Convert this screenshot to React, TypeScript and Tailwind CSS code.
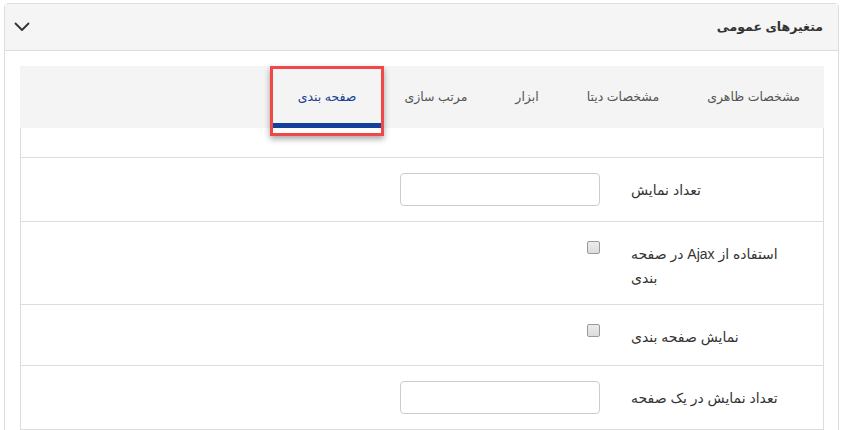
import { FC, ReactNode } from "react";

const tabs = [
  { label: "مشخصات ظاهری", active: false },
  { label: "مشخصات دیتا", active: false },
  { label: "ابزار", active: false },
  { label: "مرتب سازی", active: false },
  { label: "صفحه بندی", active: true },
];

const fontStack = { fontFamily: '"Liberation Sans", "DejaVu Sans", sans-serif' };

const TextBox: FC = () => (
  <div className="h-[33px] w-[200px] rounded-[4px] border border-[#ccc] bg-white" />
);

const CheckBox: FC = () => (
  <div className="h-[13px] w-[13px] rounded-[2px] border border-[#9a9a9a] bg-gradient-to-b from-[#ececec] to-[#dcdcdc]" />
);

interface RowProps {
  label: ReactNode;
  height: string;
  kind: "input" | "check";
}

const Row: FC<RowProps> = ({ label, height, kind }) => {
  if (kind === "input") {
    return (
      <div className={`flex items-center border-b border-[#ddd] ${height}`}>
        <div className="mr-[32px] w-[160px] text-left text-[14px] leading-[24px] text-[#333]">{label}</div>
        <div className="mr-[31px]">
          <TextBox />
        </div>
      </div>
    );
  }
  return (
    <div className={`flex items-start border-b border-[#ddd] ${height}`}>
      <div className="mr-[32px] w-[160px] pt-[20px] text-left text-[14px] leading-[24px] text-[#333]">{label}</div>
      <div className="mr-[31px] w-[200px] pt-[19px]">
        <CheckBox />
      </div>
    </div>
  );
};

const App: FC = () => {
  return (
    <div dir="rtl" className="h-[430px] w-full overflow-hidden bg-white" style={fontStack}>
      <div className="ml-[4px] mr-[4px] mt-[3px] rounded-t-[4px] border border-[#ddd]">
        {/* header */}
        <div className="flex h-[47px] items-center justify-between border-b border-[#ddd] bg-[#f5f5f5] pl-[9px] pr-[15px]">
          <span className="text-[12.5px] font-bold text-[#333]">متغیرهای عمومی</span>
          <svg width="16" height="10" viewBox="0 0 16 10" fill="none" stroke="#333" strokeWidth="1.8" strokeLinecap="round" strokeLinejoin="round">
            <path d="M1.5 1.5 8 8l6.5-6.5" />
          </svg>
        </div>

        {/* body */}
        <div className="pb-0 pl-[15px] pr-[14px] pt-[15px]">
          <div className="flex h-[62px] items-stretch bg-[#f4f4f4]">
            {tabs.map((tab) => (
              <div
                key={tab.label}
                className={`relative flex items-center px-[24px] text-[12.5px] ${
                  tab.active ? "text-[#1c3f94]" : "text-[#555]"
                }`}
              >
                {tab.label}
                {tab.active && (
                  <>
                    <span className="absolute bottom-0 left-[-1px] right-[-1px] h-[5px] bg-[#12409a]" />
                    <span className="absolute bottom-[-8px] left-[-4px] right-[-4px] top-0 border-[3px] border-[#f04848] shadow-[0_3px_6px_rgba(0,0,0,0.35)]" />
                  </>
                )}
              </div>
            ))}
          </div>

          <div className="border-x border-[#ddd]">
            <div className="h-[30px] border-b border-[#ddd]" />
            <Row kind="input" height="h-[64px]" label="تعداد نمایش" />
            <Row
              kind="check"
              height="h-[83px]"
              label={
                <>
                  استفاده از Ajax در صفحه
                  <br />
                  بندی
                </>
              }
            />
            <Row kind="check" height="h-[61px]" label="نمایش صفحه بندی" />
            <Row kind="input" height="h-[64px]" label="تعداد نمایش در یک صفحه" />
          </div>
        </div>
      </div>
    </div>
  );
};

export default App;
